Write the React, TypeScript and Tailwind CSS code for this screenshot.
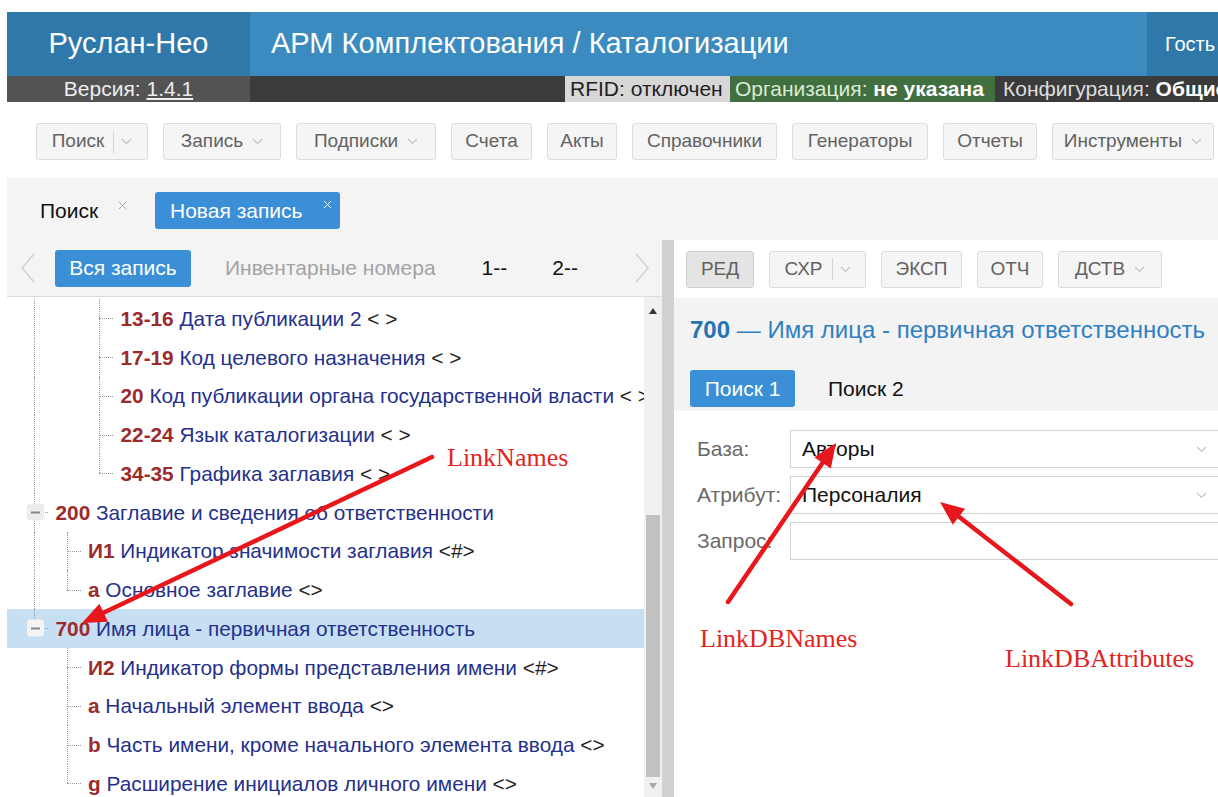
import { X } from 'lucide-react';

type Cell = 'line' | 'none';

interface TreeRow {
  ancestors: Cell[];
  last: boolean;
  expander?: boolean;
  selected?: boolean;
  code: string;
  name: string;
  suffix?: string;
}

const rows: TreeRow[] = [
  { ancestors: ['line', 'none'], last: false, code: '13-16', name: 'Дата публикации 2', suffix: '< >' },
  { ancestors: ['line', 'none'], last: false, code: '17-19', name: 'Код целевого назначения', suffix: '< >' },
  { ancestors: ['line', 'none'], last: false, code: '20', name: 'Код публикации органа государственной власти', suffix: '< >' },
  { ancestors: ['line', 'none'], last: false, code: '22-24', name: 'Язык каталогизации', suffix: '< >' },
  { ancestors: ['line', 'none'], last: true, code: '34-35', name: 'Графика заглавия', suffix: '< >' },
  { ancestors: [], last: false, expander: true, code: '200', name: 'Заглавие и сведения об ответственности' },
  { ancestors: ['line'], last: false, code: 'И1', name: 'Индикатор значимости заглавия', suffix: '<#>' },
  { ancestors: ['line'], last: true, code: 'a', name: 'Основное заглавие', suffix: '<>' },
  { ancestors: [], last: true, expander: true, selected: true, code: '700', name: 'Имя лица - первичная ответственность' },
  { ancestors: ['none'], last: false, code: 'И2', name: 'Индикатор формы представления имени', suffix: '<#>' },
  { ancestors: ['none'], last: false, code: 'a', name: 'Начальный элемент ввода', suffix: '<>' },
  { ancestors: ['none'], last: false, code: 'b', name: 'Часть имени, кроме начального элемента ввода', suffix: '<>' },
  { ancestors: ['none'], last: true, code: 'g', name: 'Расширение инициалов личного имени', suffix: '<>' },
];

const menu = [
  { label: 'Поиск', w: 'w-[112px]', caret: true, split: true },
  { label: 'Запись', w: 'w-[118px]', caret: true },
  { label: 'Подписки', w: 'w-[140px]', caret: true },
  { label: 'Счета', w: 'w-[81px]' },
  { label: 'Акты', w: 'w-[70px]' },
  { label: 'Справочники', w: 'w-[145px]' },
  { label: 'Генераторы', w: 'w-[136px]' },
  { label: 'Отчеты', w: 'w-[94px]' },
  { label: 'Инструменты', w: 'w-[162px]', caret: true },
];

const editTools = [
  { label: 'РЕД', w: 'w-[68px]', active: true },
  { label: 'СХР', w: 'w-[97px]', caret: true, split: true },
  { label: 'ЭКСП', w: 'w-[81px]' },
  { label: 'ОТЧ', w: 'w-[66px]' },
  { label: 'ДСТВ', w: 'w-[104px]', caret: true },
];

function Caret({ color = '#c2c2c2' }: { color?: string }) {
  return (
    <svg width="11" height="7" viewBox="0 0 11 7" className="shrink-0">
      <polyline points="1,1 5.5,5.5 10,1" fill="none" stroke={color} strokeWidth="1.2" />
    </svg>
  );
}

function ToolButton({
  label,
  w,
  caret,
  split,
  active,
}: {
  label: string;
  w: string;
  caret?: boolean;
  split?: boolean;
  active?: boolean;
}) {
  return (
    <div
      className={`${w} h-[37px] shrink-0 flex items-center justify-center gap-[9px] rounded-[3px] border text-[19px] text-[#626262] ${
        active ? 'bg-[#e4e4e4] border-[#cfcfcf]' : 'bg-[#f5f5f5] border-[#dcdcdc]'
      }`}
    >
      <span>{label}</span>
      {split && <span className="h-[22px] border-l border-[#d5d5d5] -mr-[2px]" />}
      {caret && <Caret />}
    </div>
  );
}

function Chevron({ dir }: { dir: 'left' | 'right' }) {
  return (
    <svg width="16" height="32" viewBox="0 0 16 32" className="shrink-0">
      <polyline
        points={dir === 'left' ? '14,2 2,16 14,30' : '2,2 14,16 2,30'}
        fill="none"
        stroke="#cfcfcf"
        strokeWidth="1.5"
      />
    </svg>
  );
}

function TreeLine({ row }: { row: TreeRow }) {
  return (
    <div
      className={`flex items-center h-[38.75px] whitespace-nowrap text-[20.8px] ${
        row.selected ? 'bg-[#c6dff2]' : ''
      }`}
    >
      {row.ancestors.map((a, i) => (
        <div key={i} className="w-[32.5px] h-full relative shrink-0">
          {a === 'line' && (
            <div className="absolute left-[27px] top-0 bottom-0 border-l border-dotted border-[#9a9a9a]" />
          )}
        </div>
      ))}
      <div className="w-[32.5px] h-full relative shrink-0">
        <div
          className={`absolute left-[27px] top-0 border-l border-dotted border-[#9a9a9a] ${
            row.last ? 'h-1/2' : 'bottom-0'
          }`}
        />
        <div className="absolute left-[27px] top-1/2 w-[14px] border-t border-dotted border-[#9a9a9a]" />
        {row.expander && (
          <div
            className={`absolute left-[20px] top-1/2 -translate-y-1/2 w-[17px] h-[17px] rounded-[3px] flex items-center justify-center ${
              row.selected ? 'bg-[#f4f4f4]' : 'bg-[#ececec]'
            }`}
          >
            <div className="w-[9px] border-t-2 border-[#888]" />
          </div>
        )}
      </div>
      <span className="ml-[16px]">
        <span className="font-bold text-[#9c2b2c]">{row.code}</span>{' '}
        <span className="text-[#24308c]">{row.name}</span>
        {row.suffix && <span className="text-[#222]"> {row.suffix}</span>}
      </span>
    </div>
  );
}

function Arrow({ x1, y1, x2, y2 }: { x1: number; y1: number; x2: number; y2: number }) {
  const len = Math.hypot(x2 - x1, y2 - y1);
  const ux = (x2 - x1) / len;
  const uy = (y2 - y1) / len;
  const head = 24;
  const half = 10;
  const bx = x2 - ux * head;
  const by = y2 - uy * head;
  const pts = `${x2},${y2} ${bx - uy * half},${by + ux * half} ${bx + uy * half},${by - ux * half}`;
  return (
    <g>
      <line x1={x1} y1={y1} x2={bx + ux * 2} y2={by + uy * 2} stroke="#e8171c" strokeWidth="4.5" strokeLinecap="round" />
      <polygon points={pts} fill="#e8171c" />
    </g>
  );
}

function Notes() {
  return (
    <svg width="1218" height="797" className="absolute left-0 top-0 pointer-events-none">
      <Arrow x1={432} y1={457} x2={82} y2={623} />
      <Arrow x1={728} y1={602} x2={836} y2={443} />
      <Arrow x1={1071} y1={604} x2={940} y2={502} />
      <g fontFamily="'Liberation Serif', serif" fontSize="26" fill="#e3231e">
        <text x="447" y="466">LinkNames</text>
        <text x="700" y="647">LinkDBNames</text>
        <text x="1005" y="667">LinkDBAttributes</text>
      </g>
    </svg>
  );
}

export default function App() {
  return (
    <div className="relative w-[1218px] h-[797px] overflow-hidden bg-white pt-[12px] pl-[7px] font-['Liberation_Sans',Arial,sans-serif]">
      <div className="w-[1260px]">
        {/* top bar */}
        <div className="flex h-[64px] bg-[#3b8bc0] text-white">
          <div className="w-[243px] bg-[#2e79a9] flex items-center justify-center text-[29px]">Руслан-Нео</div>
          <div className="flex-1 flex items-center pl-[21px] text-[29px] whitespace-nowrap">
            АРМ Комплектования / Каталогизации
          </div>
          <div className="w-[120px] bg-[#2e79a9] flex items-center pl-[18px] text-[20px]">Гость</div>
        </div>

        {/* status line */}
        <div className="flex h-[26px] bg-[#3b3b3b] text-[21px] leading-[26px] whitespace-nowrap">
          <div className="w-[243px] bg-[#535353] text-[#eee] text-center">
            Версия: <span className="underline">1.4.1</span>
          </div>
          <div className="w-[315px]" />
          <div className="w-[165px] bg-[#d7d7d7] text-[#1e1e1e] pl-[5px]">RFID: отключен</div>
          <div className="w-[265px] bg-[#416f3f] text-[#d9ecd6] pl-[5px]">
            Организация: <span className="font-bold text-white">не указана</span>
          </div>
          <div className="flex-1 text-[#ddd] pl-[8px]">
            Конфигурация: <span className="font-bold text-white">Общие</span>
          </div>
        </div>

        {/* main menu */}
        <div className="flex gap-[15px] pl-[29px] pt-[21px] pb-[18px]">
          {menu.map((m) => (
            <ToolButton key={m.label} {...m} />
          ))}
        </div>

        {/* open documents */}
        <div className="h-[62px] bg-[#f4f4f4] flex items-start pt-[14px] text-[21px]">
          <div className="h-[37px] w-[148px] flex items-center pl-[33px] text-[#111]">
            Поиск
            <X size={13} strokeWidth={1.5} className="text-[#999] ml-[18px] -mt-[10px]" />
          </div>
          <div className="h-[37px] w-[185px] bg-[#3b8fd6] rounded-[3px] text-white flex items-center pl-[15px]">
            Новая запись
            <X size={13} strokeWidth={1.8} className="ml-[18px] -mt-[12px]" />
          </div>
        </div>

        <div className="flex h-[557px]">
          {/* record tree */}
          <div className="w-[655px] flex flex-col">
            <div className="h-[57px] bg-[#f4f4f4] border-b border-[#dcdcdc] flex items-center text-[21px] whitespace-nowrap">
              <div className="pl-[13px] w-[48px]">
                <Chevron dir="left" />
              </div>
              <div className="h-[37px] w-[136px] bg-[#3b8fd6] rounded-[3px] text-white flex items-center justify-center">
                Вся запись
              </div>
              <div className="ml-[34px] text-[#a3a3a3]">Инвентарные номера</div>
              <div className="ml-[46px] text-[#111]">1--</div>
              <div className="ml-[45px] text-[#111]">2--</div>
              <div className="ml-auto mr-[12px]">
                <Chevron dir="right" />
              </div>
            </div>
            <div className="flex-1 flex overflow-hidden">
              <div className="flex-1 overflow-hidden pt-[2px]">
                {rows.map((r, i) => (
                  <TreeLine key={i} row={r} />
                ))}
              </div>
              <div className="w-[18px] bg-[#f1f1f1] flex flex-col items-center">
                <svg width="8" height="6" viewBox="0 0 8 6" className="mt-[11px]">
                  <polygon points="4,0 8,6 0,6" fill="#333" />
                </svg>
                <div className="mt-[201px] w-[14px] h-[262px] bg-[#c1c1c1]" />
                <svg width="8" height="6" viewBox="0 0 8 6" className="mt-[6px]">
                  <polygon points="0,0 8,0 4,6" fill="#a8a8a8" />
                </svg>
              </div>
            </div>
          </div>

          {/* splitter */}
          <div className="w-[12px] bg-[#d1d1d1]" />

          {/* field editor */}
          <div className="flex-1 flex flex-col">
            <div className="h-[58px] flex items-center gap-[15px] pl-[12px]">
              {editTools.map((t) => (
                <ToolButton key={t.label} {...t} />
              ))}
            </div>
            <div className="h-[113px] bg-[#f3f3f3] pl-[16px] pt-[14px]">
              <div className="text-[24px] text-[#2f80c2] whitespace-nowrap">
                <span className="font-bold text-[#2673b3]">700</span> — Имя лица - первичная ответственность
              </div>
              <div className="flex items-center mt-[22px] text-[21px]">
                <div className="h-[37px] w-[105px] bg-[#3b8fd6] rounded-[3px] text-white flex items-center justify-center">
                  Поиск 1
                </div>
                <div className="ml-[33px] text-[#111]">Поиск 2</div>
              </div>
            </div>
            <div className="flex-1 pt-[19px] pl-[23px] pr-[45px] flex flex-col gap-[8px] text-[21px]">
              {[
                { label: 'База:', value: 'Авторы', select: true },
                { label: 'Атрибут:', value: 'Персоналия', select: true },
                { label: 'Запрос:', value: '', select: false },
              ].map((f) => (
                <div key={f.label} className="flex items-center">
                  <div className="w-[93px] text-[#6a6a6a]">{f.label}</div>
                  <div className="flex-1 h-[38px] border border-[#d3d3d3] bg-white flex items-center pl-[11px] pr-[14px] text-[#111]">
                    <span className="flex-1">{f.value}</span>
                    {f.select && <Caret color="#c4c4c4" />}
                  </div>
                </div>
              ))}
            </div>
          </div>
        </div>
      </div>
      <Notes />
    </div>
  );
}
